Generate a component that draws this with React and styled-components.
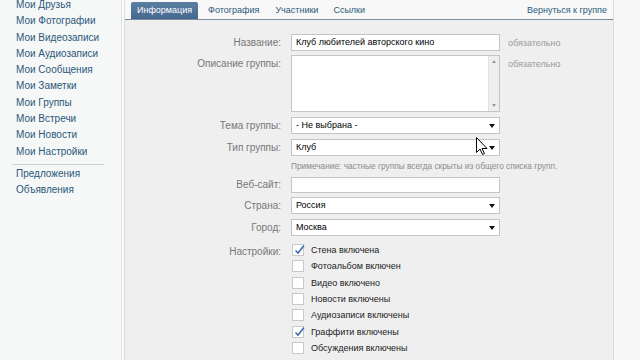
import React from "react";
import styled, { createGlobalStyle } from "styled-components";

const Global = createGlobalStyle`
  html, body { margin: 0; padding: 0; }
  body {
    width: 640px; height: 360px; overflow: hidden;
    background: #f7f7f7;
    font-family: "Liberation Sans", Arial, sans-serif;
    font-size: 10px;
  }
`;

const Page = styled.div`
  display: flex;
  width: 640px;
  height: 360px;
  position: relative;
  overflow: hidden;
`;

const Sidebar = styled.nav`
  width: 121px;
  flex: none;
  background: #f6f7f7;
  border-right: 1px solid #e3e3e3;
`;

const MenuList = styled.ul`
  list-style: none;
  margin: -3px 0 0 0;
  padding: 0;
`;

const MenuItem = styled.li`
  height: 16.3px;
  line-height: 16.3px;
  padding-left: 16px;
  color: #2b587a;
  white-space: nowrap;
`;

const Divider = styled.li`
  height: 1px;
  background: #cfcfcf;
  margin: 4px 0 1px 12px;
  width: 92px;
`;

const Gap = styled.div`
  width: 2px;
  flex: none;
  background: #fbfbfb;
  border-right: 1px solid #dddddd;
`;

const Main = styled.main`
  width: 488px;
  flex: none;
  background: #efefef;
  border-right: 1px solid #dcdcdc;
  display: flex;
  flex-direction: column;
`;

const TabBar = styled.div`
  height: 19px;
  background: #f8f8f8;
  border-bottom: 1px solid #7a8ca0;
  display: flex;
  align-items: flex-end;
  padding-left: 6px;
  padding-right: 6px;
  font-size: 9px;
`;

const Tab = styled.div`
  height: 17px;
  line-height: 17px;
  padding: 0 ${p => p.$pad}px;
  margin-right: ${p => p.$mr}px;
  color: ${p => (p.$active ? "#ffffff" : "#2b587a")};
  background: ${p => (p.$active ? "linear-gradient(#5b7ea3, #45688e)" : "transparent")};
  border-radius: 2px 2px 0 0;
  white-space: nowrap;
`;

const TabSpacer = styled.div`
  flex: 1;
`;

const Form = styled.div`
  display: flex;
  flex-direction: column;
  padding-top: 14px;
`;

const Row = styled.div`
  display: flex;
  align-items: ${p => (p.$top ? "flex-start" : "center")};
  margin-top: ${p => p.$mt || 0}px;
  min-height: ${p => p.$h || 17}px;
`;

const Label = styled.div`
  width: 156px;
  flex: none;
  text-align: right;
  color: #777777;
  padding-top: ${p => p.$pt || 0}px;
  margin-right: 10px;
  white-space: nowrap;
`;

const TextInput = styled.div`
  width: 209px;
  height: ${p => p.$h || 17}px;
  box-sizing: border-box;
  background: #ffffff;
  border: 1px solid #c4c4c4;
  padding-left: 4px;
  line-height: 15px;
  color: #000;
  font-size: 9px;
  flex: none;
  position: relative;
  white-space: nowrap;
`;

const SelectBox = styled(TextInput)`
  display: flex;
  align-items: center;
  justify-content: space-between;
  padding-right: 4px;
`;

const Arrow = styled.span`
  width: 0;
  height: 0;
  border-left: 3.5px solid transparent;
  border-right: 3.5px solid transparent;
  border-top: 4px solid #111;
`;

const Scrollbar = styled.div`
  position: absolute;
  right: 0;
  top: 0;
  bottom: 0;
  width: 11px;
  background: #eeeeee;
  border-left: 1px solid #e2e2e2;
  display: flex;
  flex-direction: column;
  justify-content: space-between;
  align-items: center;
  padding: 4px 0;
  box-sizing: border-box;
`;

const SmallArrow = styled.span`
  width: 0;
  height: 0;
  border-left: 2.5px solid transparent;
  border-right: 2.5px solid transparent;
  ${p => (p.$up ? "border-bottom: 3px solid #999;" : "border-top: 3px solid #999;")}
`;

const Hint = styled.div`
  margin-left: 8px;
  color: #9a9a9a;
  font-size: 9px;
  padding-top: ${p => (p.$top ? 4 : 0)}px;
`;

const Note = styled.div`
  margin-left: 166px;
  color: #8c8c8c;
  font-size: 8.3px;
  white-space: nowrap;
`;

const Checks = styled.div`
  display: flex;
  flex-direction: column;
`;

const CheckRow = styled.div`
  height: 16.3px;
  display: flex;
  align-items: center;
  color: #222;
  font-size: 9px;
  white-space: nowrap;
`;

const Box = styled.span`
  width: 12px;
  height: 12px;
  box-sizing: border-box;
  background: #fff;
  border: 1px solid #c8c8c8;
  margin-left: 1px;
  margin-right: 7px;
  position: relative;
  flex: none;
`;

const Tick = styled.svg`
  position: absolute;
  left: 0px;
  top: -2px;
`;

const Cursor = styled.svg`
  position: absolute;
  left: 476px;
  top: 137px;
`;

const menu1 = [
  "Мои Друзья", "Мои Фотографии", "Мои Видеозаписи", "Мои Аудиозаписи",
  "Мои Сообщения", "Мои Заметки", "Мои Группы", "Мои Встречи",
  "Мои Новости", "Мои Настройки",
];
const menu2 = ["Предложения", "Объявления"];

const settings = [
  ["Стена включена", true],
  ["Фотоальбом включен", false],
  ["Видео включено", false],
  ["Новости включены", false],
  ["Аудиозаписи включены", false],
  ["Граффити включены", true],
  ["Обсуждения включены", false],
];

function Check({ on, children }) {
  return (
    <CheckRow>
      <Box>
        {on && (
          <Tick width="13" height="13" viewBox="0 0 13 13">
            <path d="M2.5 7.5 L5 10 L11 2.5" fill="none" stroke="#3f6fa8" strokeWidth="1.6" />
          </Tick>
        )}
      </Box>
      {children}
    </CheckRow>
  );
}

export default function App() {
  return (
    <>
      <Global />
      <Page>
        <Sidebar>
          <MenuList>
            {menu1.map(m => <MenuItem key={m}>{m}</MenuItem>)}
            <Divider />
            {menu2.map(m => <MenuItem key={m}>{m}</MenuItem>)}
          </MenuList>
        </Sidebar>
        <Gap />
        <Main>
          <TabBar>
            <Tab $active $pad={6} $mr={4}>Информация</Tab>
            <Tab $pad={6} $mr={4}>Фотография</Tab>
            <Tab $pad={6} $mr={3}>Участники</Tab>
            <Tab $pad={6} $mr={0}>Ссылки</Tab>
            <TabSpacer />
            <Tab $pad={0} $mr={0}>Вернуться к группе</Tab>
          </TabBar>
          <Form>
            <Row>
              <Label>Название:</Label>
              <TextInput>Клуб любителей авторского кино</TextInput>
              <Hint>обязательно</Hint>
            </Row>
            <Row $top $mt={4} $h={57}>
              <Label $pt={3}>Описание группы:</Label>
              <TextInput $h={57}>
                <Scrollbar>
                  <SmallArrow $up />
                  <SmallArrow />
                </Scrollbar>
              </TextInput>
              <Hint $top>обязательно</Hint>
            </Row>
            <Row $mt={5}>
              <Label>Тема группы:</Label>
              <SelectBox>- Не выбрана -<Arrow /></SelectBox>
            </Row>
            <Row $mt={5}>
              <Label>Тип группы:</Label>
              <SelectBox>Клуб<Arrow /></SelectBox>
            </Row>
            <Row $h={20}>
              <Note>Примечание: частные группы всегда скрыты из общего списка групп.</Note>
            </Row>
            <Row>
              <Label>Веб-сайт:</Label>
              <TextInput $h={16} />
            </Row>
            <Row $mt={4}>
              <Label>Страна:</Label>
              <SelectBox>Россия<Arrow /></SelectBox>
            </Row>
            <Row $mt={5}>
              <Label>Город:</Label>
              <SelectBox>Москва<Arrow /></SelectBox>
            </Row>
            <Row $top $mt={6}>
              <Label $pt={4}>Настройки:</Label>
              <Checks>
                {settings.map(([t, on]) => <Check key={t} on={on}>{t}</Check>)}
              </Checks>
            </Row>
          </Form>
        </Main>
        <Cursor width="12" height="19" viewBox="0 0 12 19">
          <path d="M0.5 0.5 L0.5 15.5 L4 12 L6.5 17.5 L8.5 16.5 L6 11.5 L11 11.5 Z" fill="#fff" stroke="#000" strokeWidth="1" strokeLinejoin="round" />
        </Cursor>
      </Page>
    </>
  );
}
